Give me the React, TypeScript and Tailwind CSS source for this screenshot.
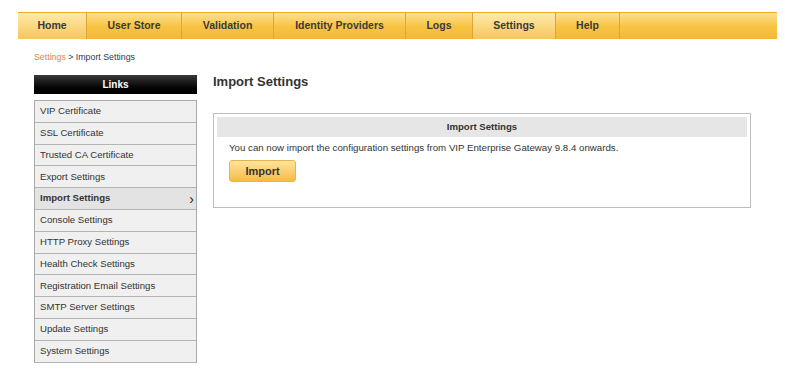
const tabs = [
  { label: "Home", w: "w-[69px]", light: true },
  { label: "User Store", w: "w-[95px]" },
  { label: "Validation", w: "w-[92px]" },
  { label: "Identity Providers", w: "w-[132px]" },
  { label: "Logs", w: "w-[67px]" },
  { label: "Settings", w: "w-[83px]", light: true },
  { label: "Help", w: "w-[64px]" },
];

const links = [
  "VIP Certificate",
  "SSL Certificate",
  "Trusted CA Certificate",
  "Export Settings",
  "Import Settings",
  "Console Settings",
  "HTTP Proxy Settings",
  "Health Check Settings",
  "Registration Email Settings",
  "SMTP Server Settings",
  "Update Settings",
  "System Settings",
];

const active = "Import Settings";

export default function App() {
  return (
    <div className="w-[785px] h-[375px] bg-white font-['Liberation_Sans',Arial,sans-serif] text-[#333]">
      {/* top navigation */}
      <div className="pt-[12px] pl-[18px]">
        <div className="flex w-[759px] h-[27px] border-t border-[#eeac2c] bg-gradient-to-b from-[#fde18c] via-[#f8c444] to-[#f6b834]">
          {tabs.map(t => (
            <div
              key={t.label}
              className={`${t.w} flex items-center justify-center border-r border-[#dfa437] text-[10.5px] font-bold text-[#3a3a3a] ${
                t.light ? "bg-gradient-to-b from-[#fdeaa9] to-[#f7c657]" : ""
              }`}
            >
              {t.label}
            </div>
          ))}
          <div className="flex-1" />
        </div>
      </div>

      {/* breadcrumb */}
      <div className="pl-[34px] pt-[13px] text-[8.8px] leading-[11px]">
        <span className="text-[#e4843a]">Settings</span>
        <span className="text-[#2c3a55]"> &gt; Import Settings</span>
      </div>

      <div className="flex pl-[34px] pt-[12px]">
        {/* sidebar */}
        <div className="w-[163px] shrink-0">
          <div className="h-[19px] flex items-center justify-center bg-gradient-to-b from-[#3a3a3a] via-[#111] to-black text-white text-[10px] font-bold">
            Links
          </div>
          <div className="mt-[6px] border border-[#a9a9a9] border-b-0">
            {links.map(l => {
              const on = l === active;
              return (
                <div
                  key={l}
                  className={`h-[21.8px] flex items-center justify-between pl-[5px] pr-[2px] border-b border-[#b4b4b4] text-[9.6px] ${
                    on ? "bg-[#e3e3e3] font-bold" : "bg-[#f0f0f0]"
                  }`}
                >
                  <span>{l}</span>
                  {on && <span className="text-[14px] font-normal text-[#222] leading-none">›</span>}
                </div>
              );
            })}
          </div>
        </div>

        {/* main */}
        <div className="ml-[16px] w-[538px]">
          <h1 className="-mt-[2px] text-[13px] font-bold leading-[18px] text-[#333]">Import Settings</h1>
          <div className="mt-[22px] h-[95px] border border-[#bdbdbd] p-[3px]">
            <div className="h-[20px] flex items-center justify-center bg-[#e6e6e6] text-[9.6px] font-bold">
              Import Settings
            </div>
            <div className="pl-[12px] pt-[5px]">
              <p className="text-[9.7px] leading-[12px]">
                You can now import the configuration settings from VIP Enterprise Gateway 9.8.4 onwards.
              </p>
              <button className="mt-[6px] w-[67px] h-[22px] rounded-[3px] border border-[#e5b44a] bg-gradient-to-b from-[#fde49a] to-[#f5bd3f] text-[11px] font-bold text-[#333]">
                Import
              </button>
            </div>
          </div>
        </div>
      </div>
    </div>
  );
}
